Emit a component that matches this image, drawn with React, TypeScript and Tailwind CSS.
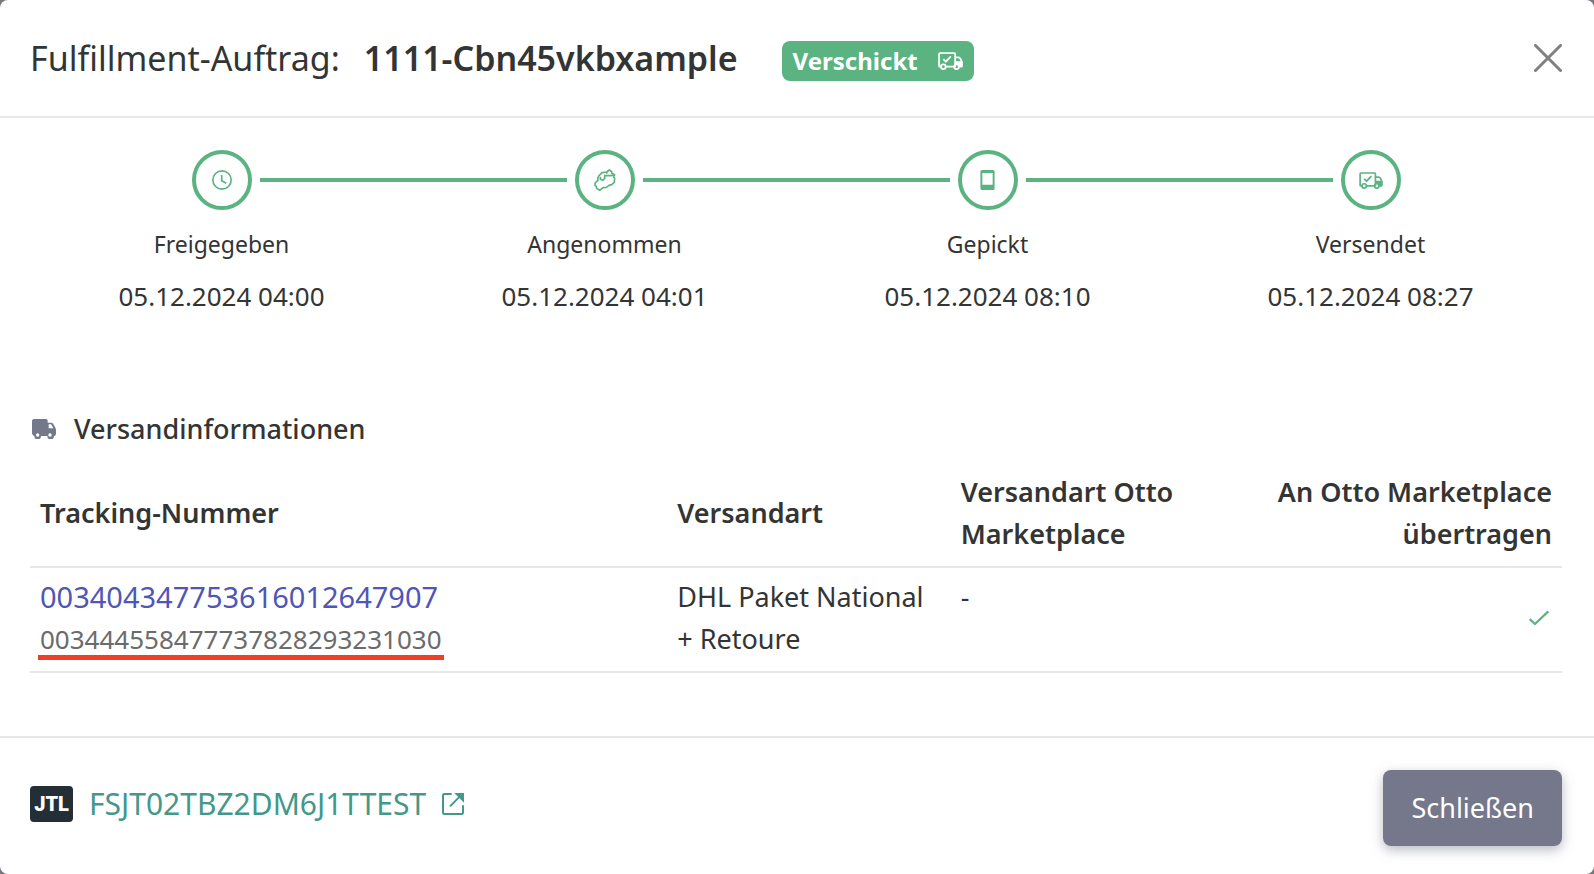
import type { ReactNode } from 'react';

type IconProps = { className?: string };

function TruckCheckIcon({ className }: IconProps) {
  return (
    <svg viewBox="0 0 70 50" fill="none" stroke="currentColor" strokeWidth="5" className={className} aria-hidden="true">
      <path d="M8 41H5a2 2 0 0 1-2-2V5a2 2 0 0 1 2-2h41a2 2 0 0 1 2 2v36M22 41h23" />
      <path d="M48 15h9q4 0 6 4l4 9v11q0 2-2 2h-6" />
      <path d="M49 26h19v13h-9l-7-5h-3z" fill="currentColor" stroke="none" />
      <path d="M15 20l7 7 14-15" />
      <circle cx="15" cy="41" r="6.5" />
      <circle cx="52" cy="41" r="6.5" />
    </svg>
  );
}

function TruckIcon({ className }: IconProps) {
  return (
    <svg viewBox="0 0 72 60" fill="currentColor" className={className} aria-hidden="true">
      <path
        fillRule="evenodd"
        d="M6 0h36q5 0 5 5v6h10q5 0 7 4l6 11q2 4 2 8v10q0 7-6 7a10 10 0 0 1-20 0H27a10 10 0 0 1-20 0Q0 50 0 43V6q0-6 6-6zM50 16v12h14l-5-10q-1-2-3-2zM17 43a5 5 0 1 0 0 10a5 5 0 1 0 0-10zM54 43a5 5 0 1 0 0 10a5 5 0 1 0 0-10z"
      />
    </svg>
  );
}

function ClockIcon({ className }: IconProps) {
  return (
    <svg viewBox="0 0 60 60" fill="none" stroke="currentColor" strokeWidth="5" className={className} aria-hidden="true">
      <circle cx="30" cy="30" r="27.5" />
      <path d="M29 15v17l14 8" />
    </svg>
  );
}

function HandsIcon({ className }: IconProps) {
  return (
    <svg viewBox="0 0 64 66" fill="none" stroke="currentColor" strokeWidth="5" strokeLinejoin="round" className={className} aria-hidden="true">
      <path d="M37 9l8-6 7 5v4l9 6-3 6 3 4-1 12-8 7-8 2-8 6-10 1-10 8-9-6-1-6-4-3 1-8 8-7-1-4 3-9 10-10z" />
      <path d="M37 9v5M18 23v8l7 3 6-5v-9h20l9-2" />
    </svg>
  );
}

function ScannerIcon({ className }: IconProps) {
  return (
    <svg viewBox="0 0 44 62" fill="currentColor" className={className} aria-hidden="true">
      <path fillRule="evenodd" d="M5 0h34q5 0 5 5v52q0 5-5 5H5q-5 0-5-5V5q0-5 5-5zM6 9v37h32V9z" />
    </svg>
  );
}

function ExternalIcon({ className }: IconProps) {
  return (
    <svg viewBox="0 0 66 66" fill="none" stroke="currentColor" strokeWidth="6" className={className} aria-hidden="true">
      <path d="M29 3H7q-4 0-4 4v52q0 4 4 4h52q4 0 4-4V37" />
      <path d="M24 40l32-32" />
      <path d="M37 0h29v29z" fill="currentColor" stroke="none" />
    </svg>
  );
}

const steps: { label: string; date: string; icon: ReactNode }[] = [
  { label: 'Freigegeben', date: '05.12.2024 04:00', icon: <ClockIcon className="size-5" /> },
  { label: 'Angenommen', date: '05.12.2024 04:01', icon: <HandsIcon className="size-[22px]" /> },
  { label: 'Gepickt', date: '05.12.2024 08:10', icon: <ScannerIcon className="h-5 w-[15px]" /> },
  { label: 'Versendet', date: '05.12.2024 08:27', icon: <TruckCheckIcon className="h-[17px] w-6" /> },
];

function Stepper() {
  return (
    <ol className="grid grid-cols-4 text-center">
      {steps.map((step, i) => (
        <li key={step.label}>
          <div className="flex items-center gap-2">
            <span className={`h-1 flex-1 ${i > 0 ? 'bg-[#5bb381]' : ''}`} />
            <span className="flex size-[60px] items-center justify-center rounded-full border-4 border-[#5bb381] text-[#5bb381]">
              {step.icon}
            </span>
            <span className={`h-1 flex-1 ${i < steps.length - 1 ? 'bg-[#5bb381]' : ''}`} />
          </div>
          <p className="mt-4 text-[23px] leading-9">{step.label}</p>
          <p className="mt-4 text-[26px] leading-9">{step.date}</p>
        </li>
      ))}
    </ol>
  );
}

function ShippingTable() {
  return (
    <table className="w-full table-fixed border-collapse text-left text-[27px] leading-[42px]">
      <colgroup>
        <col className="w-[41.6%]" />
        <col className="w-[18.5%]" />
        <col className="w-[18%]" />
        <col />
      </colgroup>
      <thead>
        <tr className="border-b-2 border-[#e7e7ec]">
          <th className="px-2.5 pt-2.5 pb-[11px] font-semibold">Tracking-Nummer</th>
          <th className="px-2.5 pt-2.5 pb-[11px] font-semibold">Versandart</th>
          <th className="px-2.5 pt-2.5 pb-[11px] font-semibold">Versandart Otto Marketplace</th>
          <th className="px-2.5 pt-2.5 pb-[11px] text-right font-semibold">
            An Otto Marketplace
            <br />
            übertragen
          </th>
        </tr>
      </thead>
      <tbody>
        <tr className="border-b-2 border-[#e7e7ec]">
          <td className="px-2.5 pt-2 pb-[11px] align-top">
            <a href="#tracking" className="block w-fit text-[29px] text-[#4f56b8]">003404347753616012647907</a>
            <span className="relative block w-fit text-[26px] text-[#6b6b6b]">
              003444558477737828293231030
              <span className="absolute -inset-x-0.5 bottom-0 h-[5px] bg-[#ee4027]" />
            </span>
          </td>
          <td className="px-2.5 pt-2 pb-[11px] align-top">
            DHL Paket National
            <br />+ Retoure
          </td>
          <td className="px-2.5 pt-2 pb-[11px] align-top">-</td>
          <td className="px-2.5 pt-2 pb-[11px]">
            <svg viewBox="0 0 60 46" fill="none" stroke="#5bb381" strokeWidth="7" className="mr-[3px] ml-auto h-4 w-5" role="img" aria-label="Ja">
              <path d="M2 26l16 15L58 3" />
            </svg>
          </td>
        </tr>
      </tbody>
    </table>
  );
}

export default function App() {
  return (
    <div className="min-h-screen bg-[#77777c] font-['Noto_Sans',sans-serif] text-[#333534]">
      <div role="dialog" aria-labelledby="dialog-title" className="flex min-h-screen flex-col rounded-lg bg-white">
        <header className="flex items-center border-b-2 border-[#e7e7ec] pr-8 pl-[30px]">
          <h1 id="dialog-title" className="flex gap-6 py-8 text-[34px] leading-[52px]">
            <span>Fulfillment-Auftrag:</span>
            <span className="font-semibold">1111-Cbn45vkbxample</span>
          </h1>
          <span className="mt-1.5 ml-11 flex h-10 items-center gap-5 rounded-lg bg-[#5bb381] px-[11px] text-2xl font-bold text-white">
            Verschickt
            <TruckCheckIcon className="h-[18px] w-[25px]" />
          </span>
          <button type="button" aria-label="Dialog schließen" className="ml-auto text-[#808080]">
            <svg viewBox="0 0 28 28" fill="none" stroke="currentColor" strokeWidth="3" strokeLinecap="round" className="size-7">
              <path d="M1.500 1.500l25 25M26.500 1.500l-25 25" />
            </svg>
          </button>
        </header>

        <main className="flex-1 pt-8 pr-8 pl-[30px]">
          <Stepper />
          <section className="mt-[94px]">
            <h2 className="flex items-center gap-[18px] pl-0.5 text-[27px] leading-[42px] font-medium">
              <TruckIcon className="h-5 w-6 text-[#75788b]" />
              Versandinformationen
            </h2>
            <div className="mt-[11px]">
              <ShippingTable />
            </div>
          </section>
        </main>

        <footer className="flex items-center justify-between border-t-2 border-[#e7e7ec] pt-8 pr-8 pb-7 pl-[30px]">
          <a href="#auftrag" className="flex items-center pb-2 text-[30px] leading-9 text-[#43988a]">
            <span className="mr-4 flex h-9 w-[43px] items-center justify-center rounded bg-[#232e37] font-[Roboto,sans-serif] text-xl font-black text-white">
              JTL
            </span>
            FSJT02TBZ2DM6J1TTEST
            <ExternalIcon className="ml-4 size-[22px]" />
          </a>
          <button type="button" className="h-[76px] rounded-lg bg-[#75788b] px-7 text-[27px] text-white shadow-[0_4px_12px_rgba(117,120,139,0.5)]">
            Schließen
          </button>
        </footer>
      </div>
    </div>
  );
}
